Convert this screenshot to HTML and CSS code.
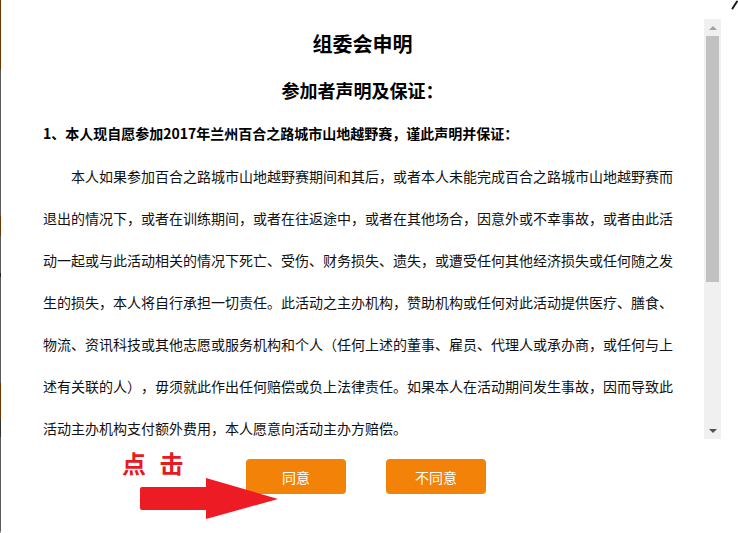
FILE: index.html
```html
<!DOCTYPE html>
<html lang="zh-CN">
<head>
<meta charset="utf-8">
<title>组委会申明</title>
<link rel="stylesheet" href="styles.css">
</head>
<body>
<div class="page">
  <div class="edge"></div>
  <div class="modal">
    <div class="scroller">
      <div class="content">
        <h1 class="title">组委会申明</h1>
        <h2 class="subtitle">参加者声明及保证：</h2>
        <p class="clause">1、本人现自愿参加2017年兰州百合之路城市山地越野赛，谨此声明并保证：</p>
        <p class="para">本人如果参加百合之路城市山地越野赛期间和其后，或者本人未能完成百合之路城市山地越野赛而退出的情况下，或者在训练期间，或者在往返途中，或者在其他场合，因意外或不幸事故，或者由此活动一起或与此活动相关的情况下死亡、受伤、财务损失、遗失，或遭受任何其他经济损失或任何随之发生的损失，本人将自行承担一切责任。此活动之主办机构，赞助机构或任何对此活动提供医疗、膳食、物流、资讯科技或其他志愿或服务机构和个人（任何上述的董事、雇员、代理人或承办商，或任何与上述有关联的人），毋须就此作出任何赔偿或负上法律责任。如果本人在活动期间发生事故，因而导致此活动主办机构支付额外费用，本人愿意向活动主办方赔偿。</p>
        <p class="clause">2、本人身体健康，适合参加本项赛事。</p>
      </div>
      <div class="scrollbar">
        <div class="sb-btn"><span class="arrow-up"></span></div>
        <div class="sb-track">
          <div class="sb-thumb"></div>
        </div>
        <div class="sb-btn"><span class="arrow-down"></span></div>
      </div>
    </div>
    <div class="actions">
      <button class="btn" type="button">同意</button>
      <button class="btn" type="button">不同意</button>
    </div>
    <div class="hint">点&nbsp;击</div>
    <svg class="hint-arrow" width="139" height="42" viewBox="0 0 139 42">
      <path d="M2,9 H66 V0 L138,21 L66,41 V32 H2 Q0,32 0,30 V11 Q0,9 2,9 Z" fill="#ed1c24"/>
    </svg>
  </div>
  <svg class="close" width="8" height="10" viewBox="0 0 8 10">
    <path d="M2.5,8.5 L7,1.5" stroke="#1a1a1a" stroke-width="2" stroke-linecap="round"/>
  </svg>
</div>
</body>
</html>
```
FILE: styles.css
```css
* { box-sizing: border-box; }
html, body {
  margin: 0;
  padding: 0;
  background: #fff;
}
body {
  font-family: "Noto Sans CJK SC", "Noto Sans", sans-serif;
  color: #111;
  overflow: hidden;
  text-spacing-trim: space-all;
}
.page {
  position: relative;
  display: flex;
  width: 738px;
  height: 533px;
}
.edge {
  width: 1px;
  flex: none;
  background: linear-gradient(to bottom,
    #6b3900 0 70px,
    #5a5a5a 70px 216px,
    #6b3900 216px 236px,
    #5a5a5a 236px 273px,
    #222 273px 277px,
    #5a5a5a 277px 383px,
    #6b3900 383px 420px,
    #333 420px 437px,
    #5a5a5a 437px 531px,
    #999 531px);
}
.modal {
  position: relative;
  flex: 1;
  padding: 19px 0 0 20px;
}
.scroller {
  display: flex;
  width: 700px;
  height: 420px;
}
.content {
  flex: 1;
  overflow: hidden;
  padding: 0 22px;
}
.title {
  margin: 11px 0 0;
  font-size: 20px;
  line-height: 28px;
  font-weight: 700;
  text-align: center;
  color: #000;
}
.subtitle {
  margin: 19px 0 0;
  font-size: 18px;
  line-height: 26px;
  font-weight: 700;
  text-align: center;
  color: #000;
}
.clause {
  margin: 20px 0 0;
  font-size: 14px;
  line-height: 20px;
  font-weight: 700;
  color: #000;
}
.para {
  margin: 12px 0 0;
  font-size: 14px;
  line-height: 42px;
  text-indent: 2em;
}
.scrollbar {
  width: 17px;
  flex: none;
  display: flex;
  flex-direction: column;
  background: #f0f0f0;
}
.sb-btn {
  height: 17px;
  flex: none;
  display: flex;
  align-items: center;
  justify-content: center;
}
.arrow-up {
  width: 0;
  height: 0;
  border-left: 4px solid transparent;
  border-right: 4px solid transparent;
  border-bottom: 4px solid #a3a3a3;
}
.arrow-down {
  width: 0;
  height: 0;
  border-left: 4px solid transparent;
  border-right: 4px solid transparent;
  border-top: 4px solid #505050;
  margin-top: 1px;
}
.sb-track {
  flex: 1;
  padding: 0 2px;
}
.sb-thumb {
  height: 246px;
  background: #c1c1c1;
}
.actions {
  display: flex;
  justify-content: center;
  gap: 40px;
  width: 700px;
  padding-right: 10px;
  margin-top: 20px;
}
.btn {
  width: 100px;
  height: 35px;
  border: none;
  border-radius: 4px;
  background: #f38208;
  color: #fff;
  font-family: "Noto Sans CJK SC", "Noto Sans", sans-serif;
  font-size: 14px;
  padding: 0;
}
.hint {
  position: absolute;
  left: 121px;
  top: 451px;
  font-size: 24px;
  line-height: 24px;
  font-weight: 700;
  color: #e8191f;
  white-space: nowrap;
  word-spacing: 8px;
}
.hint-arrow {
  position: absolute;
  left: 139px;
  top: 478px;
}
.close {
  position: absolute;
  left: 730px;
  top: 0;
}
```
